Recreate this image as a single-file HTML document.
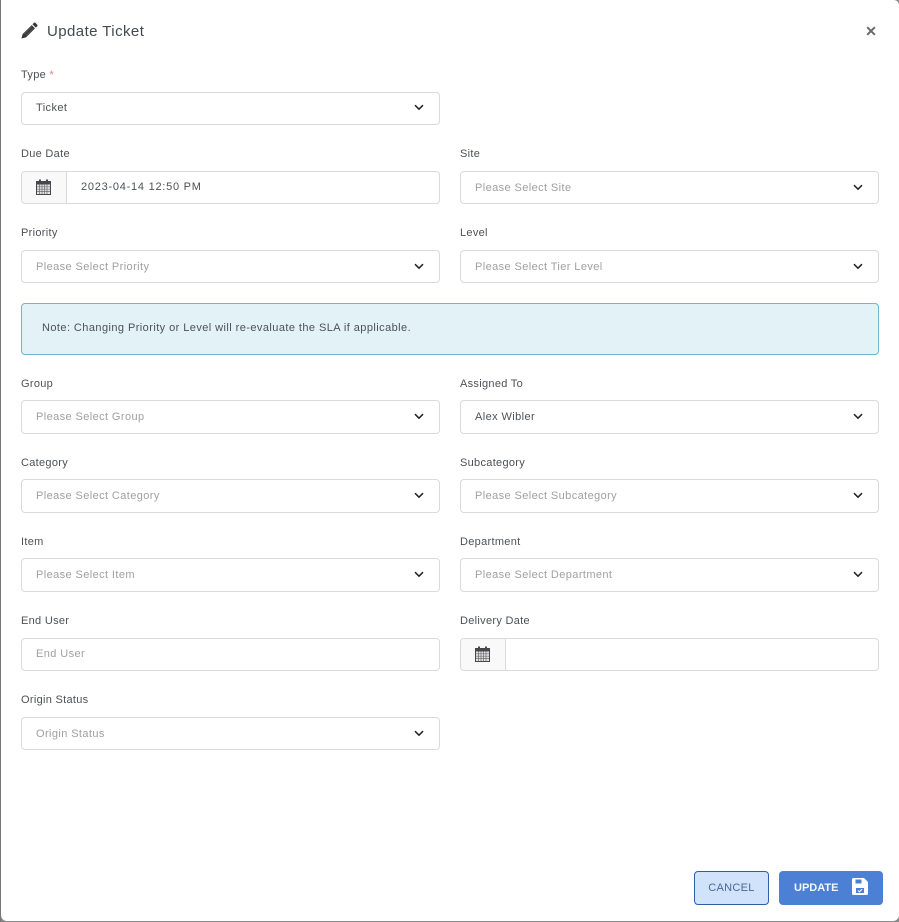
<!DOCTYPE html>
<html><head><meta charset="utf-8"><title>Update Ticket</title>
<style>
html,body{margin:0;padding:0;width:899px;height:922px;overflow:hidden;background:#8a8a8a}
body{font-family:"Liberation Sans",sans-serif;position:relative}
#m{position:absolute;left:1px;top:0;width:898px;height:921px;background:#fff;border-radius:0 5px 6px 6px}
#tl{position:absolute;left:0;top:0;width:1px;height:922px;background:#77777a}
.a{position:absolute;white-space:nowrap}
.l{position:absolute;font-size:11px;line-height:14px;color:#4d5156;letter-spacing:.3px;white-space:nowrap;margin-top:1px}
.f{position:absolute;width:417px;height:31px;border:1px solid #dadada;border-radius:4px;background:#fff;font-size:11px;line-height:32px;letter-spacing:.4px;color:#a0a0a0;box-sizing:content-box;text-indent:14px;white-space:nowrap}
.v{color:#4d5156}
.f svg.c{position:absolute;right:15px;top:12px;width:10px;height:7px}
.g{position:absolute;left:0;top:0;width:44px;height:31px;background:#f9f9f9;border-right:1px solid #dadada;border-radius:4px 0 0 4px}
.g svg{position:absolute;left:14px;top:7px;width:15px;height:16px}
.d{position:absolute;left:59px;top:0;text-indent:0;letter-spacing:.75px;color:#4d5156;line-height:30px}
</style></head><body>
<div id="tl"></div>
<div id="m"></div>
<svg class="a" style="left:21px;top:22px" width="17" height="17" viewBox="0 0 17 17"><path d="M13 .8q.7-.5 1.300 0l2 2q.5.6 0 1.300l-1.500 1.500-3.300-3.300zM10.700 3.100L14 6.400 5 15.400.5 16.500l1.100-4.400z" fill="#33363a"/><path d="M3.300 12l7.500-7.300M5 13.500l7.300-7.300" stroke="#8a8c8f" stroke-width=".5"/></svg>
<div class="a" style="left:47px;top:21px;font-size:15px;line-height:21px;color:#45494e;letter-spacing:.43px">Update Ticket</div>
<svg class="a" style="left:866px;top:26px" width="10" height="10" viewBox="0 0 10 10"><path d="M1.200 1.200l7.600 7.600M8.800 1.200L1.200 8.800" stroke="#666a6e" stroke-width="2"/></svg>

<div class="l" style="left:21px;top:67px">Type <span style="color:#e98080">*</span></div>
<div class="f v" style="left:21px;top:92px;line-height:30px">Ticket<svg class="c" style="top:11px" viewBox="0 0 10 7"><path d="M1 1.200l4 4 4-4" fill="none" stroke="#222" stroke-width="1.500"/></svg></div>

<div class="l" style="left:21px;top:146px">Due Date</div>
<div class="f" style="left:21px;top:171px"><div class="g"><svg viewBox="0 0 15 16"><path d="M0 2h3V.5h2V2h5V.5h2V2h3v14H0z" fill="#45484c"/><path d="M1 5.500h13V15H1z" fill="#e4e4e4"/><path d="M3.500 5.500V15M6 5.500V15M8.500 5.500V15M11 5.500V15M1 7.800h13M1 10.200h13M1 12.600h13" stroke="#6a6a6a" stroke-width=".7"/></svg></div><span class="d">2023-04-14 12:50 PM</span></div>
<div class="l" style="left:460px;top:146px">Site</div>
<div class="f" style="left:460px;top:171px">Please Select Site<svg class="c" viewBox="0 0 10 7"><path d="M1 1.200l4 4 4-4" fill="none" stroke="#222" stroke-width="1.500"/></svg></div>

<div class="l" style="left:21px;top:225px">Priority</div>
<div class="f" style="left:21px;top:250px">Please Select Priority<svg class="c" viewBox="0 0 10 7"><path d="M1 1.200l4 4 4-4" fill="none" stroke="#222" stroke-width="1.500"/></svg></div>
<div class="l" style="left:460px;top:225px">Level</div>
<div class="f" style="left:460px;top:250px">Please Select Tier Level<svg class="c" viewBox="0 0 10 7"><path d="M1 1.200l4 4 4-4" fill="none" stroke="#222" stroke-width="1.500"/></svg></div>

<div class="a" style="left:21px;top:303px;width:856px;height:50px;background:#e2f2f6;border:1px solid #6cb9cd;border-radius:4px;font-size:11px;line-height:48px;letter-spacing:.43px;color:#4d5156;text-indent:20px">Note: Changing Priority or Level will re-evaluate the SLA if applicable.</div>

<div class="l" style="left:21px;top:376px">Group</div>
<div class="f" style="left:21px;top:400px;height:32px">Please Select Group<svg class="c" viewBox="0 0 10 7"><path d="M1 1.200l4 4 4-4" fill="none" stroke="#222" stroke-width="1.500"/></svg></div>
<div class="l" style="left:460px;top:376px">Assigned To</div>
<div class="f v" style="left:460px;top:400px;height:32px">Alex Wibler<svg class="c" viewBox="0 0 10 7"><path d="M1 1.200l4 4 4-4" fill="none" stroke="#222" stroke-width="1.500"/></svg></div>

<div class="l" style="left:21px;top:455px">Category</div>
<div class="f" style="left:21px;top:479px;height:32px">Please Select Category<svg class="c" viewBox="0 0 10 7"><path d="M1 1.200l4 4 4-4" fill="none" stroke="#222" stroke-width="1.500"/></svg></div>
<div class="l" style="left:460px;top:455px">Subcategory</div>
<div class="f" style="left:460px;top:479px;height:32px">Please Select Subcategory<svg class="c" viewBox="0 0 10 7"><path d="M1 1.200l4 4 4-4" fill="none" stroke="#222" stroke-width="1.500"/></svg></div>

<div class="l" style="left:21px;top:534px">Item</div>
<div class="f" style="left:21px;top:558px;height:32px">Please Select Item<svg class="c" viewBox="0 0 10 7"><path d="M1 1.200l4 4 4-4" fill="none" stroke="#222" stroke-width="1.500"/></svg></div>
<div class="l" style="left:460px;top:534px">Department</div>
<div class="f" style="left:460px;top:558px;height:32px">Please Select Department<svg class="c" viewBox="0 0 10 7"><path d="M1 1.200l4 4 4-4" fill="none" stroke="#222" stroke-width="1.500"/></svg></div>

<div class="l" style="left:21px;top:613px">End User</div>
<div class="f" style="left:21px;top:638px;line-height:30px">End User</div>
<div class="l" style="left:460px;top:613px">Delivery Date</div>
<div class="f" style="left:460px;top:638px"><div class="g"><svg viewBox="0 0 15 16"><path d="M0 2h3V.5h2V2h5V.5h2V2h3v14H0z" fill="#45484c"/><path d="M1 5.500h13V15H1z" fill="#e4e4e4"/><path d="M3.500 5.500V15M6 5.500V15M8.500 5.500V15M11 5.500V15M1 7.800h13M1 10.200h13M1 12.600h13" stroke="#6a6a6a" stroke-width=".7"/></svg></div></div>

<div class="l" style="left:21px;top:692px">Origin Status</div>
<div class="f" style="left:21px;top:717px">Origin Status<svg class="c" viewBox="0 0 10 7"><path d="M1 1.200l4 4 4-4" fill="none" stroke="#222" stroke-width="1.500"/></svg></div>

<div class="a" style="left:694px;top:871px;width:73px;height:32px;background:#d0e3fa;border:1px solid #2f5ea8;border-radius:4px;font-size:11px;line-height:32px;text-align:center;letter-spacing:.3px;color:#4a6796">CANCEL</div>
<div class="a" style="left:779px;top:871px;width:104px;height:34px;background:#4c80d4;border-radius:4px;font-size:11px;font-weight:bold;line-height:34px;color:#f4f7fd;text-indent:15px">UPDATE</div>
<svg class="a" style="left:852px;top:878px" width="16" height="17" viewBox="0 0 16 17"><path d="M0 1.500A1.500 1.500 0 0 1 1.500 0H12l4 4v11.500a1.500 1.500 0 0 1-1.500 1.500h-13A1.500 1.500 0 0 1 0 15.500z" fill="#fff"/><path d="M3.500 1.500h6v4h-6z" fill="#4c80d4"/><path d="M4 10h8v5H4z" fill="#4c80d4"/><path d="M6 12.500l1.500 1.300 2.500-2.600" stroke="#fff" stroke-width="1.100" fill="none"/></svg>
</body></html>
